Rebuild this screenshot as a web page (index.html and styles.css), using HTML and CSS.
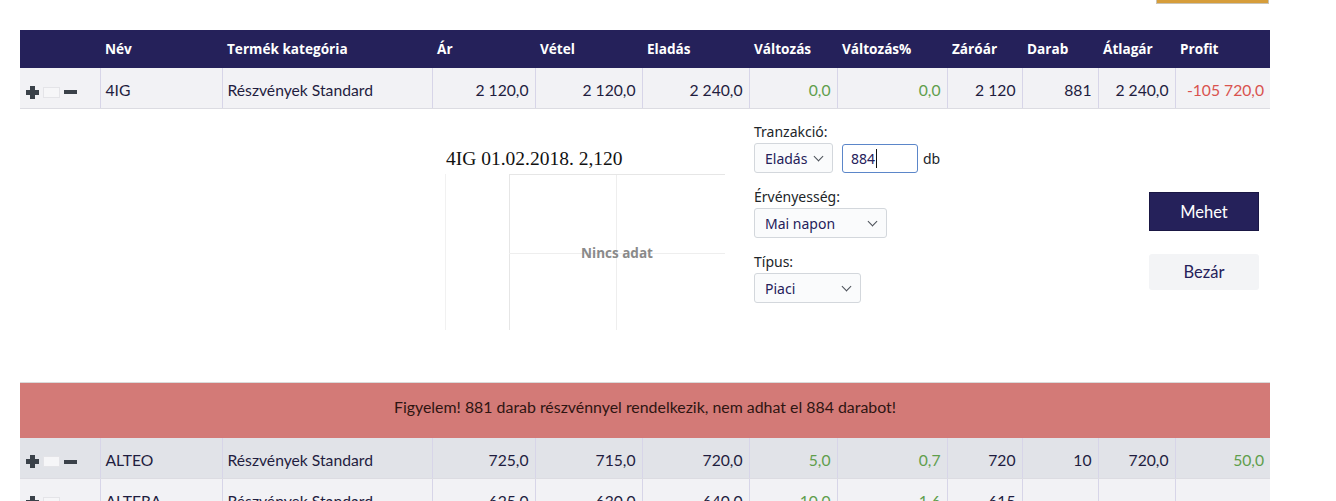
FILE: index.html
```html
<!DOCTYPE html>
<html lang="hu">
<head>
    <meta charset="UTF-8">
    <title>Portfólió</title>
    <link rel="stylesheet" href="styles.css">
</head>
<body>
    <div class="page">
        <div class="topbar"><div class="gold-bar"></div></div>

        <table class="stocks">
            <colgroup>
                <col style="width: 80px">
                <col style="width: 122px">
                <col style="width: 210px">
                <col style="width: 103px">
                <col style="width: 107px">
                <col style="width: 107px">
                <col style="width: 88px">
                <col style="width: 110px">
                <col style="width: 75px">
                <col style="width: 76px">
                <col style="width: 77px">
                <col style="width: 95px">
            </colgroup>
            <thead>
                <tr>
                    <th></th>
                    <th>Név</th>
                    <th>Termék kategória</th>
                    <th>Ár</th>
                    <th>Vétel</th>
                    <th>Eladás</th>
                    <th>Változás</th>
                    <th>Változás%</th>
                    <th>Záróár</th>
                    <th>Darab</th>
                    <th>Átlagár</th>
                    <th>Profit</th>
                </tr>
            </thead>
            <tbody>
                <tr class="row">
                    <td class="actions"><span class="plus"></span><span class="qty"></span><span class="minus"></span></td>
                    <td class="name">4IG</td>
                    <td class="name">Részvények Standard</td>
                    <td>2 120,0</td>
                    <td>2 120,0</td>
                    <td>2 240,0</td>
                    <td class="up">0,0</td>
                    <td class="up">0,0</td>
                    <td>2 120</td>
                    <td>881</td>
                    <td>2 240,0</td>
                    <td class="down">-105 720,0</td>
                </tr>
                <tr class="detail">
                    <td colspan="12">
                        <div class="detail-inner">
                            <div class="chart">
                                <div class="chart-title">4IG 01.02.2018. 2,120</div>
                                <div class="plot">
                                    <svg width="280" height="156" viewBox="0 0 280 156">
                                        <line x1="0.5" y1="0" x2="0.5" y2="156" stroke="#f1f1f1"/>
                                        <line x1="64.5" y1="0" x2="64.5" y2="156" stroke="#e6e6e6"/>
                                        <line x1="171.5" y1="0" x2="171.5" y2="156" stroke="#eeeeee"/>
                                        <line x1="64" y1="0.5" x2="280" y2="0.5" stroke="#e6e6e6"/>
                                        <line x1="64" y1="79.5" x2="280" y2="79.5" stroke="#eeeeee"/>
                                    </svg>
                                    <span class="no-data">Nincs adat</span>
                                </div>
                            </div>

                            <div class="order-form">
                                <label>Tranzakció:</label>
                                <div class="field-row">
                                    <div class="select sel-type">Eladás <span class="chev"></span></div>
                                    <div class="amount">884<span class="caret"></span></div>
                                    <span class="unit">db</span>
                                </div>

                                <label>Érvényesség:</label>
                                <div class="select sel-valid">Mai napon <span class="chev"></span></div>

                                <label>Típus:</label>
                                <div class="select sel-kind">Piaci <span class="chev"></span></div>
                            </div>

                            <div class="buttons">
                                <button class="btn-go">Mehet</button>
                                <button class="btn-close">Bezár</button>
                            </div>
                        </div>
                    </td>
                </tr>
                <tr class="alert">
                    <td colspan="12">Figyelem! 881 darab részvénnyel rendelkezik, nem adhat el 884 darabot!</td>
                </tr>
                <tr class="row dark">
                    <td class="actions"><span class="plus"></span><span class="qty"></span><span class="minus"></span></td>
                    <td class="name">ALTEO</td>
                    <td class="name">Részvények Standard</td>
                    <td>725,0</td>
                    <td>715,0</td>
                    <td>720,0</td>
                    <td class="up">5,0</td>
                    <td class="up">0,7</td>
                    <td>720</td>
                    <td>10</td>
                    <td>720,0</td>
                    <td class="up">50,0</td>
                </tr>
                <tr class="row">
                    <td class="actions"><span class="plus"></span><span class="qty"></span><span class="minus"></span></td>
                    <td class="name">ALTERA</td>
                    <td class="name">Részvények Standard</td>
                    <td>625,0</td>
                    <td>630,0</td>
                    <td>640,0</td>
                    <td class="up">10,0</td>
                    <td class="up">1,6</td>
                    <td>615</td>
                    <td></td>
                    <td></td>
                    <td></td>
                </tr>
            </tbody>
        </table>
    </div>
</body>
</html>
```

FILE: styles.css
```css
body {
    margin: 0;
    background: #fff;
    font-family: 'Lato', sans-serif;
    color: #1f1d3f;
}
.page {
    padding: 0 66px 0 20px;
}
.topbar {
    height: 30px;
    display: flex;
    justify-content: flex-end;
    padding-right: 1px;
}
.gold-bar {
    width: 111px;
    height: 3px;
    background: #d69d3a;
    border: 1px solid #c9c3b5;
    border-top: none;
}
.stocks {
    width: 1250px;
    border-collapse: collapse;
    table-layout: fixed;
}
.stocks th {
    background: #25215a;
    color: #fff;
    font-family: 'Open Sans', sans-serif;
    font-weight: 700;
    font-size: 13.6px;
    text-align: left;
    height: 37px;
    padding: 0 5px 1px;
}
.row td {
    background: #f2f2f5;
    height: 36px;
    padding: 4px 6px 0;
    font-size: 15.7px;
    text-align: right;
    border-left: 1px solid #d7d5e8;
    border-bottom: 1px solid #dcdce2;
    white-space: nowrap;
}
.row.dark td {
    background: #e1e3e8;
}
.row td:first-child {
    border-left: none;
}
.row td.name {
    text-align: left;
    padding-left: 5px;
}
.row td.up {
    color: #5f9e4c;
}
.row td.down {
    color: #d9534f;
}
.row td.actions {
    text-align: left;
    padding-left: 6px;
}
.actions span {
    display: inline-block;
    vertical-align: middle;
    position: relative;
}
.plus {
    width: 13px;
    height: 13px;
}
.plus::before,
.plus::after {
    content: "";
    position: absolute;
    background: #3a4149;
}
.plus::before {
    left: 0;
    top: 4px;
    width: 13px;
    height: 5px;
}
.plus::after {
    left: 4px;
    top: 0;
    width: 5px;
    height: 13px;
}
.qty {
    width: 15px;
    height: 9px;
    margin: 0 4px;
    border: 1px solid #e4e4e8;
    background: #f6f6f8;
}
.minus {
    width: 13px;
    height: 4px;
    background: #3a4149;
}

.detail td {
    padding: 0;
    height: 273px;
    vertical-align: top;
}
.detail-inner {
    display: flex;
    padding: 13px 0 0 425px;
}
.chart {
    width: 280px;
    padding-top: 26px;
}
.chart-title {
    font-family: 'Liberation Serif', serif;
    font-size: 19.5px;
    color: #111;
    height: 26px;
    padding-left: 1px;
}
.plot {
    position: relative;
    height: 156px;
}
.plot svg {
    display: block;
}
.no-data {
    position: absolute;
    left: 172px;
    top: 79px;
    transform: translate(-50%, -50%);
    font-family: 'Open Sans', sans-serif;
    font-size: 13.5px;
    font-weight: 700;
    color: #8a8a8a;
}
.order-form {
    margin-left: 29px;
    width: 395px;
    font-family: 'Noto Sans', sans-serif;
    font-size: 14px;
    color: #212529;
}
.order-form label {
    display: block;
    line-height: 20px;
    margin-bottom: 1px;
}
.field-row {
    display: flex;
    align-items: center;
    gap: 9px;
    margin-bottom: 14px;
}
.select {
    box-sizing: border-box;
    height: 30px;
    border: 1px solid #d3d7dc;
    border-radius: 3px;
    background: #fafbfc;
    color: #25215a;
    padding: 0 10px;
    display: flex;
    align-items: center;
    justify-content: space-between;
}
.sel-type {
    width: 79px;
}
.sel-valid {
    width: 133px;
    margin-bottom: 14px;
}
.sel-kind {
    width: 107px;
}
.chev {
    width: 6px;
    height: 6px;
    border-right: 1.5px solid #4a4f57;
    border-bottom: 1.5px solid #4a4f57;
    transform: rotate(45deg);
    margin-top: -4px;
}
.amount {
    box-sizing: border-box;
    width: 76px;
    height: 29px;
    border: 1px solid #5b86c9;
    border-radius: 3px;
    padding: 0 0 0 8px;
    display: flex;
    align-items: center;
    color: #25215a;
}
.caret {
    width: 1px;
    height: 19px;
    background: #111;
    margin-left: 1px;
}
.unit {
    margin-left: -4px;
    color: #212529;
}
.buttons {
    display: flex;
    flex-direction: column;
    gap: 23px;
    padding-top: 70px;
}
.buttons button {
    width: 110px;
    font-family: 'Lato', sans-serif;
    font-size: 16.5px;
    cursor: pointer;
}
.btn-go {
    height: 39px;
    background: #25215a;
    color: #fff;
    border: 1px solid #1a1744;
}
.btn-close {
    height: 36px;
    background: #f3f4f6;
    color: #25215a;
    border: none;
    border-radius: 3px;
}

.alert td {
    background: #d37a77;
    color: #2e1512;
    font-size: 15.9px;
    text-align: center;
    vertical-align: top;
    height: 55px;
    padding: 14px 0 0;
    box-sizing: border-box;
    border-top: 1px solid #dadada;
}
```
